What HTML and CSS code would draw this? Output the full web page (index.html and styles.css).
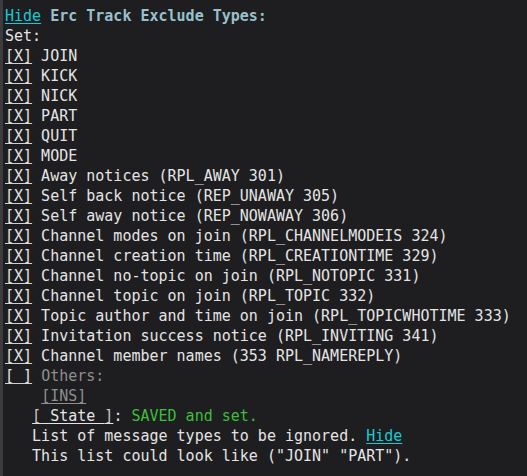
FILE: index.html
```html
<!DOCTYPE html>
<html>
<head>
<meta charset="utf-8">
<link rel="stylesheet" href="styles.css">
</head>
<body>
<div class="frame">
  <div class="fringe"></div>
  <div class="buffer">
    <div class="line"><span class="link">Hide</span> <span class="title">Erc Track Exclude Types:</span></div>
    <div class="line">Set:</div>
    <div class="line"><span class="box">[X]</span> JOIN</div>
    <div class="line"><span class="box">[X]</span> KICK</div>
    <div class="line"><span class="box">[X]</span> NICK</div>
    <div class="line"><span class="box">[X]</span> PART</div>
    <div class="line"><span class="box">[X]</span> QUIT</div>
    <div class="line"><span class="box">[X]</span> MODE</div>
    <div class="line"><span class="box">[X]</span> Away notices (RPL_AWAY 301)</div>
    <div class="line"><span class="box">[X]</span> Self back notice (REP_UNAWAY 305)</div>
    <div class="line"><span class="box">[X]</span> Self away notice (REP_NOWAWAY 306)</div>
    <div class="line"><span class="box">[X]</span> Channel modes on join (RPL_CHANNELMODEIS 324)</div>
    <div class="line"><span class="box">[X]</span> Channel creation time (RPL_CREATIONTIME 329)</div>
    <div class="line"><span class="box">[X]</span> Channel no-topic on join (RPL_NOTOPIC 331)</div>
    <div class="line"><span class="box">[X]</span> Channel topic on join (RPL_TOPIC 332)</div>
    <div class="line"><span class="box">[X]</span> Topic author and time on join (RPL_TOPICWHOTIME 333)</div>
    <div class="line"><span class="box">[X]</span> Invitation success notice (RPL_INVITING 341)</div>
    <div class="line"><span class="box">[X]</span> Channel member names (353 RPL_NAMEREPLY)</div>
    <div class="line"><span class="box">[ ]</span> <span class="dim">Others:</span></div>
    <div class="line">    <span class="ins">[INS]</span></div>
    <div class="line">   <span class="state"><span class="br">[</span> State <span class="br">]</span></span>: <span class="ok">SAVED and set.</span></div>
    <div class="line">   List of message types to be ignored. <span class="link">Hide</span></div>
    <div class="line">   This list could look like ("JOIN" "PART").</div>
  </div>
</div>
</body>
</html>
```
FILE: styles.css
```css
html, body {
  margin: 0;
  padding: 0;
  background: #1e1e20;
}
.frame {
  display: flex;
  width: 527px;
  height: 476px;
  overflow: hidden;
  background: #1e1e20;
}
.fringe {
  width: 3px;
  flex: none;
  background: #3c3c3e;
}
.buffer {
  padding: 6px 0 0 2px;
  font-family: "DejaVu Sans Mono", "Liberation Mono", monospace;
  font-size: 15px;
  color: #e4e4e4;
}
.line {
  height: 20px;
  line-height: 20px;
  white-space: pre;
}
.link {
  color: #16cbd6;
  text-decoration: underline;
  text-underline-offset: 2px;
}
.title {
  color: #98c0cc;
  font-weight: bold;
}
.box {
  text-decoration: underline;
  text-underline-offset: 2px;
  text-decoration-color: #d0d0d0;
}
.dim {
  color: #8e8e8e;
}
.ins {
  color: #8e8e8e;
  text-decoration: underline;
  text-underline-offset: 2px;
}
.state {
  text-decoration: underline;
  text-underline-offset: 2px;
}
.br {
  color: #c8c8c8;
}
.ok {
  color: #3cbf3c;
}
```
